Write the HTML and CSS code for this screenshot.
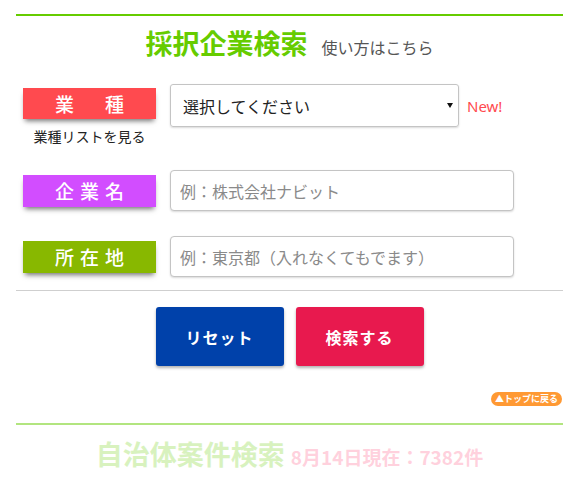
FILE: index.html
```html
<!DOCTYPE html>
<html lang="ja">
<head>
<meta charset="utf-8">
<title>採択企業検索</title>
<link rel="stylesheet" href="styles.css">
</head>
<body>
<div class="wrap">
  <div class="head">
    <h1 class="title">採択企業検索</h1>
    <a class="howto" href="#">使い方はこちら</a>
  </div>

  <div class="row row-first">
    <div class="label-col">
      <div class="label label-red">業　種</div>
      <a class="list-link" href="#">業種リストを見る</a>
    </div>
    <div class="select-wrap">
      <div class="select-box">
        <span class="select-text">選択してください</span>
        <span class="select-arrow"></span>
      </div>
      <span class="new">New!</span>
    </div>
  </div>

  <div class="row">
    <div class="label label-purple">企業名</div>
    <input class="field" type="text" placeholder="例：株式会社ナビット">
  </div>

  <div class="row">
    <div class="label label-green">所在地</div>
    <input class="field" type="text" placeholder="例：東京都（入れなくてもでます）">
  </div>

  <div class="buttons">
    <button class="btn btn-reset" type="button">リセット</button>
    <button class="btn btn-search" type="button">検索する</button>
  </div>

  <div class="top-row">
    <a class="to-top" href="#">▲トップに戻る</a>
  </div>

  <div class="next">
    <div class="next-line"></div>
    <div class="next-head">
      <span class="next-title">自治体案件検索</span>
      <span class="next-count">8月14日現在：7382件</span>
    </div>
  </div>
</div>
</body>
</html>
```

FILE: styles.css
```css
* { box-sizing: border-box; }

body {
  margin: 0;
  background: #fff;
  font-family: "Noto Sans CJK JP", "Noto Sans", sans-serif;
  color: #333;
}

.wrap {
  width: 547px;
  margin: 14px 0 0 16px;
  border-top: 2px solid #66cc00;
}

.head {
  display: flex;
  justify-content: center;
  align-items: baseline;
  gap: 14px;
  margin-top: 9px;
}

.title {
  margin: 0;
  font-size: 27px;
  line-height: 36px;
  font-weight: 700;
  color: #66cc00;
}

.howto {
  font-size: 16px;
  color: #555;
  text-decoration: none;
}

.row {
  display: flex;
  align-items: center;
  gap: 14px;
  padding-left: 7px;
  margin-top: 25px;
}

.row-first {
  align-items: flex-start;
  margin-top: 23px;
}

.label-col {
  display: flex;
  flex-direction: column;
  align-items: center;
  width: 133px;
  padding-top: 4px;
}

.label {
  width: 133px;
  height: 32px;
  flex: none;
  display: flex;
  align-items: center;
  justify-content: center;
  color: #fff;
  font-size: 19px;
  font-weight: 500;
  letter-spacing: 6px;
  text-indent: 6px;
  box-shadow: 0 4px 5px -2px rgba(0, 0, 0, 0.55);
}

.label-red { background: #ff4a4f; height: 31px; }
.label-purple { background: #d24dff; }
.label-green { background: #88b800; }

.list-link {
  margin-top: 8px;
  font-size: 14px;
  line-height: 18px;
  color: #222;
  text-decoration: none;
  white-space: nowrap;
}

.select-wrap {
  display: flex;
  align-items: center;
  gap: 8px;
}

.select-box {
  width: 289px;
  height: 43px;
  display: flex;
  align-items: center;
  justify-content: space-between;
  padding: 0 5px 0 12px;
  border: 1px solid #c4c4c4;
  border-radius: 3px;
  box-shadow: 0 1px 2px rgba(0, 0, 0, 0.15);
  font-size: 16px;
  color: #222;
}

.select-arrow {
  width: 0;
  height: 0;
  border-left: 3px solid transparent;
  border-right: 3px solid transparent;
  border-top: 5px solid #111;
}

.new {
  font-family: "Noto Sans", "Liberation Sans", sans-serif;
  font-size: 15px;
  color: #ff4a4f;
}

.field {
  width: 344px;
  height: 41px;
  padding: 0 9px;
  border: 1px solid #c4c4c4;
  border-radius: 4px;
  box-shadow: 0 1px 2px rgba(0, 0, 0, 0.15);
  font-family: "Noto Sans CJK JP", sans-serif;
  font-size: 16px;
  color: #333;
  outline: none;
}

.field::placeholder { color: #8a8a8a; }

.buttons {
  display: flex;
  justify-content: center;
  gap: 12px;
  margin-top: 13px;
  border-top: 1px solid #cfcfcf;
  padding-top: 16px;
}

.btn {
  width: 128px;
  height: 59px;
  border: none;
  border-radius: 3px;
  color: #fff;
  font-family: "Noto Sans CJK JP", sans-serif;
  font-size: 16px;
  font-weight: 700;
  letter-spacing: 1px;
  box-shadow: 0 2px 3px rgba(0, 0, 0, 0.3);
}

.btn-reset { background: #0041aa; }
.btn-search { background: #e8194e; }

.top-row {
  display: flex;
  justify-content: flex-end;
  margin-top: 26px;
  padding-right: 1px;
}

.to-top {
  display: block;
  height: 14px;
  padding: 0 4px;
  border-radius: 7px;
  background: #ff9933;
  color: #fff;
  font-size: 9px;
  line-height: 14px;
  font-weight: 700;
  text-decoration: none;
}

.next-line {
  margin-top: 17px;
  height: 2px;
  background: #66cc00;
  opacity: 0.5;
}

.next-head {
  display: flex;
  justify-content: center;
  align-items: baseline;
  gap: 6px;
  margin-top: 11px;
  opacity: 0.25;
}

.next-title {
  font-size: 27px;
  line-height: 36px;
  font-weight: 700;
  color: #66cc00;
}

.next-count {
  font-size: 19px;
  font-weight: 700;
  color: #ff4a7a;
}
```
